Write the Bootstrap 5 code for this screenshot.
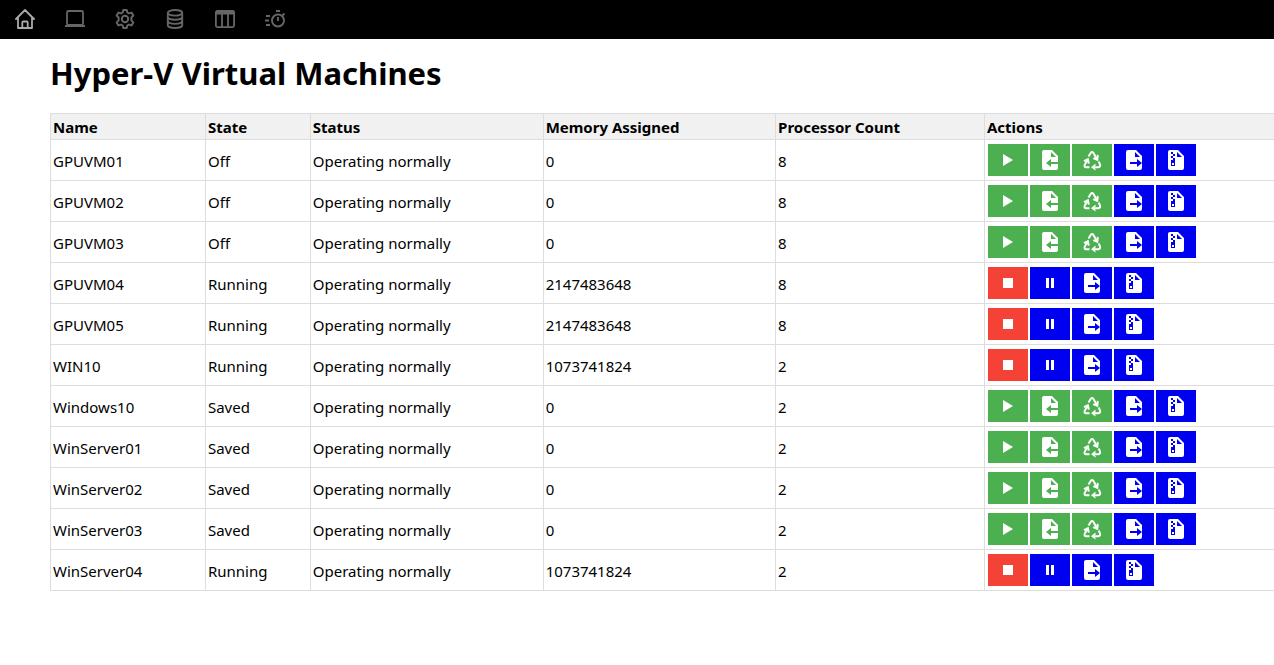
<!DOCTYPE html>
<html lang="en">
<head>
<meta charset="utf-8">
<meta name="viewport" content="width=device-width, initial-scale=1">
<title>Hyper-V Virtual Machines</title>
<link href="https://cdn.jsdelivr.net/npm/bootstrap@5.3.0/dist/css/bootstrap.min.css" rel="stylesheet">
<style>
body{font-family:"Noto Sans","Open Sans",sans-serif;font-size:15px;line-height:20px;color:#000;overflow-x:hidden}
.topbar{background:#000;height:39px;padding:0 15px 1px;gap:30px}
.topbar a{color:#666;line-height:0}
.topbar a.active{color:#aaa}
.topbar svg{width:20px;height:20px}
.content{margin-left:50px}
h1{font-size:31px;line-height:44px;font-weight:700;margin:12px 0 18px}
.vm-table{width:100vw;table-layout:fixed;border-collapse:collapse}
.vm-table th,.vm-table td{border:1px solid #ddd;padding:3px 2px 2px}
.vm-table th{background:#f1f1f1;font-weight:700}
.vm-table td{height:41px}
.vm-table td.acts{padding:3px}
.acts div{gap:2px}
.act{width:40px;height:32px;border:0;padding:0;color:#fff;display:flex;align-items:center;justify-content:center}
.act svg{width:24px;height:24px}
.go{background:#4caf50}.halt{background:#f44336}.info-act{background:#0000f0}
</style>
</head>
<body>
<svg class="d-none" aria-hidden="true">
<symbol id="play" viewBox="0 0 24 24"><path fill="currentColor" d="M7 6v12l10-6z"/></symbol>
<symbol id="stop" viewBox="0 0 24 24"><path fill="currentColor" d="M7 7h10v10H7z"/></symbol>
<symbol id="pause" viewBox="0 0 24 24"><path fill="currentColor" d="M8 7h3v10H8zm5 0h3v10h-3z"/></symbol>
<symbol id="import" viewBox="0 0 24 24"><path fill="currentColor" d="M20 14V8l-6-6H6a2 2 0 0 0-2 2v16a2 2 0 0 0 2 2h12a2 2 0 0 0 2-2v-4h-7v3l-5-4 5-4v3h7zM13 4l5 5h-5V4z"/></symbol>
<symbol id="export" viewBox="0 0 24 24"><path fill="currentColor" d="M18 22a2 2 0 0 0 2-2v-5l-5 4v-3H8v-2h7v-3l5 4V8l-6-6H6a2 2 0 0 0-2 2v16a2 2 0 0 0 2 2h12zM13 4l5 5h-5V4z"/></symbol>
<symbol id="archive" viewBox="0 0 24 24"><path fill="currentColor" fill-rule="evenodd" d="M14 2H6a2 2 0 0 0-2 2v16a2 2 0 0 0 2 2h12a2 2 0 0 0 2-2V8l-6-6zM13 4l5 5h-5V4zM7 4h2v2H7zM9 6h2v2H9zM7 8h2v2H7zM9 10h2v2H9zM7 12h4v6H7zM8 15v2h2v-2z"/></symbol>
<symbol id="recycle" viewBox="0 0 24 24"><g fill="none" stroke="currentColor" stroke-width="2"><path d="M8.500 8.500 10.700 5q1.400-2 2.800 0l3.300 6"/><path d="M9.500 19.300H6.300q-2.600-.4-1.500-2.700L7.300 12"/><path d="m18.600 13.500 1.300 2.600q1 2.800-1.600 3.200H13"/></g><path fill="currentColor" d="m18.800 7.500-.7 5.800-5.300-2.200 1-1.900 2.600 1 .5-3.600zM3.500 12.200 8.600 9.800l1.200 5.700-2 .3-.8-3-2.500 1.300zM15.500 15.500v2.200l-1.500 1.600 1.500 1.600v1.600l-4.500-3.200z"/></symbol>
</svg>
<nav class="topbar d-flex align-items-center" aria-label="Main">
<a href="#" class="active" aria-label="Home"><svg viewBox="0 0 20 20" fill="none" stroke="currentColor" stroke-width="1.800" stroke-linejoin="round" stroke-linecap="round"><path d="M1 10 10 1l9 9M3 8.500V19h14V8.500M7.300 19v-5.500q0-1 1-1h3.400q1 0 1 1V19"/></svg></a>
<a href="#" aria-label="Machines"><svg viewBox="0 0 20 20" fill="none" stroke="currentColor"><rect x="2" y="2" width="16" height="14" rx="1.500" stroke-width="1.800"/><path stroke-width="2" d="M0 17h20"/></svg></a>
<a href="#" aria-label="Settings"><svg viewBox="0 0 20 20" fill="none" stroke="currentColor" stroke-width="2" stroke-linejoin="round"><path d="M8.300 1h3.400l.6 2.500 1.600.9 2.600-.8 1.800 3-1.900 1.900v3l1.900 1.900-1.800 3-2.600-.8-1.600.9-.6 2.500H8.300l-.6-2.500-1.600-.9-2.600.8-1.800-3 1.900-1.900v-3L1.700 6.600l1.800-3 2.600.8 1.600-.9z"/><circle cx="10" cy="10" r="3.200"/></svg></a>
<a href="#" aria-label="Storage"><svg viewBox="0 0 20 20" fill="none" stroke="currentColor" stroke-width="1.900"><ellipse cx="10" cy="3.800" rx="7.200" ry="2.800"/><path d="M2.800 4v12.200c0 1.600 3.200 2.800 7.200 2.800s7.200-1.200 7.200-2.800V4M2.800 8c0 1.600 3.200 2.800 7.200 2.800S17.200 9.600 17.200 8M2.800 12.100c0 1.600 3.200 2.800 7.200 2.800s7.200-1.200 7.200-2.800"/></svg></a>
<a href="#" aria-label="Table"><svg viewBox="0 0 20 20" fill="none" stroke="currentColor" stroke-width="1.800"><rect x=".9" y="1.900" width="18.200" height="16.200" rx="1.500"/><path d="M7 5v13M13 5v13"/><path stroke-width="4" d="M1 3.500h18"/></svg></a>
<a href="#" aria-label="Schedule"><svg viewBox="0 0 20 20" fill="none" stroke="currentColor" stroke-width="1.900"><circle cx="13" cy="11.500" r="6"/><path d="M11 2h4M13 8v4M17.500 6.500l2-2M1 7h4M0 11.500h4M1 16h4"/></svg></a>
</nav>
<main class="content">
<h1>Hyper-V Virtual Machines</h1>
<table class="vm-table">
<colgroup><col style="width:12.170%"><col style="width:8.240%"><col style="width:18.290%"><col style="width:18.260%"><col style="width:16.410%"><col></colgroup>
<thead><tr><th>Name</th><th>State</th><th>Status</th><th>Memory Assigned</th><th>Processor Count</th><th>Actions</th></tr></thead>
<tbody id="vms"></tbody>
</table>
</main>
<script src="https://cdn.jsdelivr.net/npm/bootstrap@5.3.0/dist/js/bootstrap.bundle.min.js"></script>
<script>
const vms=[["GPUVM01","Off",0,8],["GPUVM02","Off",0,8],["GPUVM03","Off",0,8],["GPUVM04","Running",2147483648,8],["GPUVM05","Running",2147483648,8],["WIN10","Running",1073741824,2],["Windows10","Saved",0,2],["WinServer01","Saved",0,2],["WinServer02","Saved",0,2],["WinServer03","Saved",0,2],["WinServer04","Running",1073741824,2]];
const btn=([cls,icon])=>`<button type="button" class="act ${cls}" aria-label="${icon}"><svg><use href="#${icon}"/></svg></button>`;
const shared=[["info-act","export"],["info-act","archive"]];
document.getElementById("vms").innerHTML=vms.map(([n,s,m,c])=>{
const list=(s==="Running"?[["halt","stop"],["info-act","pause"]]:[["go","play"],["go","import"],["go","recycle"]]).concat(shared);
return `<tr><td>${n}</td><td>${s}</td><td>Operating normally</td><td>${m}</td><td>${c}</td><td class="acts"><div class="d-flex">${list.map(btn).join("")}</div></td></tr>`}).join("");
</script>
</body>
</html>
